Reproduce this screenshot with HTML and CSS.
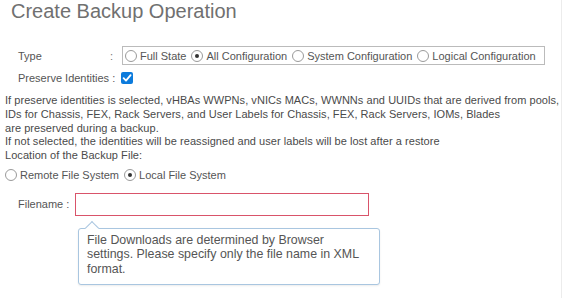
FILE: index.html
```html
<!DOCTYPE html>
<html>

<head>
  <title>Create Backup Operation</title>
  <link rel="stylesheet" href="styles.css">
</head>

<body>
  <div class="page">
    <h1 class="title">Create Backup Operation</h1>

    <div class="row type-row">
      <span class="label">Type</span>
      <span class="colon">:</span>
      <div class="radio-group">
        <label class="radio"><span class="dot"></span>Full State</label>
        <label class="radio checked"><span class="dot"></span>All Configuration</label>
        <label class="radio"><span class="dot"></span>System Configuration</label>
        <label class="radio"><span class="dot"></span>Logical Configuration</label>
      </div>
    </div>

    <div class="row preserve-row">
      <span class="label wide">Preserve Identities :</span>
      <span class="checkbox">
        <svg width="12" height="12" viewBox="0 0 12 12">
          <rect width="12" height="12" rx="2" fill="#0c7bdc" />
          <path d="M2.6 6.2 L5 8.6 L9.6 3.2" stroke="#fff" stroke-width="1.8" fill="none" stroke-linecap="round" stroke-linejoin="round" />
        </svg>
      </span>
    </div>

    <div class="note">
      If preserve identities is selected, vHBAs WWPNs, vNICs MACs, WWNNs and UUIDs that are derived from pools,<br>
      IDs for Chassis, FEX, Rack Servers, and User Labels for Chassis, FEX, Rack Servers, IOMs, Blades<br>
      are preserved during a backup.<br>
      If not selected, the identities will be reassigned and user labels will be lost after a restore<br>
      Location of the Backup File:
    </div>

    <div class="row location-row">
      <label class="radio"><span class="dot"></span>Remote File System</label>
      <label class="radio checked"><span class="dot"></span>Local File System</label>
    </div>

    <div class="row filename-row">
      <span class="label fn">Filename :</span>
      <input class="filename" type="text">
    </div>

    <div class="tooltip">
      File Downloads are determined by Browser<br>
      settings. Please specify only the file name in XML<br>
      format.
    </div>
  </div>
</body>

</html>
```

FILE: styles.css
```css
body {
  margin: 0;
  background: #fff;
  font-family: "Liberation Sans", Arial, sans-serif;
  color: #4a4a4a;
}

.page {
  width: 562px;
  height: 298px;
  border-right: 1px solid #ececec;
  box-sizing: border-box;
  padding-left: 5px;
}

.title {
  margin: 0 0 0 6px;
  font-size: 20px;
  line-height: 22px;
  font-weight: normal;
  color: #707070;
}

.row {
  display: flex;
  align-items: center;
  font-size: 11px;
}

.type-row {
  margin-top: 24px;
  height: 19px;
}

.label {
  width: 92px;
  padding-left: 13px;
  color: #555;
}

.label.wide {
  width: 103px;
}

.colon {
  width: 12px;
  color: #777;
}

.radio-group {
  display: flex;
  align-items: center;
  height: 19px;
  border: 1px solid #bbb;
  box-sizing: border-box;
  width: 423px;
  padding-left: 2px;
}

.radio {
  display: flex;
  align-items: center;
  margin-right: 5px;
  color: #555;
}

.dot {
  width: 10px;
  height: 10px;
  border: 1px solid #9a9a9a;
  border-radius: 50%;
  margin-right: 3px;
  position: relative;
  background: #fff;
}

.radio.checked .dot::after {
  content: "";
  position: absolute;
  left: 3px;
  top: 3px;
  width: 4px;
  height: 4px;
  border-radius: 50%;
  background: #333;
}

.preserve-row {
  margin-top: 4px;
  height: 18px;
}

.checkbox {
  display: flex;
}

.note {
  margin-top: 7px;
  font-size: 11px;
  line-height: 13.8px;
  letter-spacing: 0.05px;
  white-space: nowrap;
  color: #4a4a4a;
}

.location-row {
  margin-top: 4px;
  height: 16px;
}

.filename-row {
  margin-top: 10px;
  height: 23px;
}

.label.fn {
  width: 57px;
}

.filename {
  width: 294px;
  height: 23px;
  box-sizing: border-box;
  border: 1px solid #d9546a;
  margin: 0;
  padding: 0 4px;
  outline: none;
}

.tooltip {
  position: relative;
  margin: 12px 0 0 73px;
  width: 302px;
  height: 57px;
  box-sizing: border-box;
  padding: 4px 8px;
  border: 1px solid #a9c6e0;
  border-radius: 3px;
  background: #fff;
  box-shadow: 0 1px 2px rgba(0, 0, 0, 0.08);
  font-size: 12.4px;
  line-height: 14.5px;
  white-space: nowrap;
  color: #555;
}

.tooltip::before {
  content: "";
  position: absolute;
  left: 8px;
  top: -6px;
  width: 9px;
  height: 9px;
  background: #fff;
  border-left: 1px solid #a9c6e0;
  border-top: 1px solid #a9c6e0;
  transform: rotate(45deg);
}
```
